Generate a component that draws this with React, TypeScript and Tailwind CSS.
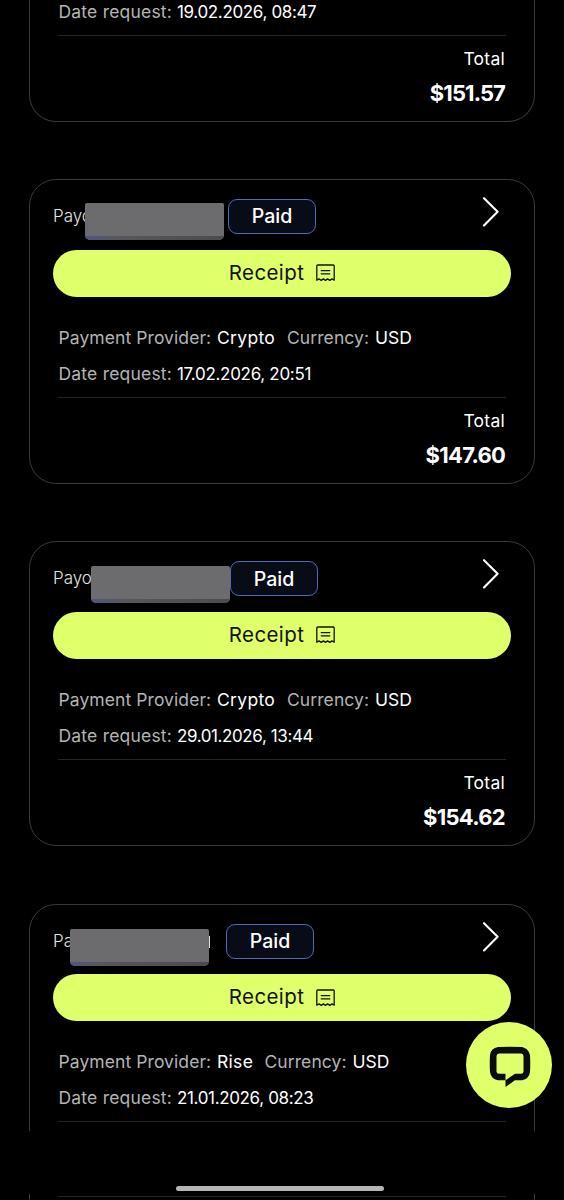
type Payout = {
  title: string;
  maskClass: string;
  badgeClass: string;
  provider: string;
  providerClass: string;
  date: string;
  dateClass: string;
  amount?: string;
  amountClass?: string;
};

const payouts: Payout[] = [
  {
    title: 'Payo',
    maskClass: 'left-[32px] top-[23px]',
    badgeClass: 'ml-[175px]',
    provider: 'Crypto',
    providerClass: 'w-[70px] tracking-[0.3px]',
    date: '17.02.2026, 20:51',
    dateClass: 'tracking-[-0.3px]',
    amount: '$147.60',
    amountClass: 'tracking-[-0.75px]',
  },
  {
    title: 'Payo',
    maskClass: 'left-[38px] top-[23.5px]',
    badgeClass: 'ml-[177px]',
    provider: 'Crypto',
    providerClass: 'w-[70px] tracking-[0.3px]',
    date: '29.01.2026, 13:44',
    dateClass: 'tracking-[-0.4px]',
    amount: '$154.62',
    amountClass: 'tracking-[-0.7px]',
  },
  {
    title: 'Pa',
    maskClass: 'left-[17px] top-[24px]',
    badgeClass: 'ml-[173px]',
    provider: 'Rise',
    providerClass: 'w-[47.5px] tracking-[0.3px]',
    date: '21.01.2026, 08:23',
    dateClass: 'tracking-[-0.35px]',
  },
];

function ReceiptIcon() {
  return (
    <svg width="19" height="18" viewBox="0 0 19 18" fill="none" stroke="#10130a" strokeWidth="1.3" strokeLinecap="round" strokeLinejoin="round">
      <path d="M0.8 16.2V2Q0.8 1 1.8 1H17.2Q18.2 1 18.2 2V16.2L16 14.9L13.8 16.4L11.6 14.9L9.5 16.4L7.4 14.9L5.2 16.4L3 14.9Z" />
      <path d="M5.2 6.6H13.8M5.2 9.8H13.8" />
    </svg>
  );
}

function Summary({ date, dateClass, amount, amountClass }: Pick<Payout, 'date' | 'dateClass' | 'amount' | 'amountClass'>) {
  return (
    <>
      <div className="flex h-6 items-center whitespace-nowrap px-[5.5px] text-[17.5px] leading-6">
        <span className="w-[118.5px] tracking-[0.2px] text-[#b4b4b4]">Date request:</span>
        <span className={`text-[17px] ${dateClass}`}>{date}</span>
      </div>
      <div className="mx-[5px] mt-[11px] h-px bg-[#252525]" />
      {amount && (
        <>
          <div className="mr-[6px] mt-[11px] text-right text-[17.5px] leading-6 tracking-[0.25px]">Total</div>
          <div className="mr-[6px] mt-[8px] text-right text-[22px] font-bold leading-7">
            <span className={amountClass}>{amount}</span>
          </div>
        </>
      )}
    </>
  );
}

function Card({ item }: { item: Payout }) {
  return (
    <article className="h-[305px] w-[506px] shrink-0 rounded-[27px] border border-[#3a3a3a] px-[23px]">
      <header className="relative flex pt-[19px]">
        <span className="absolute left-0 top-[24px] text-[17px] font-light leading-6 text-[#e4e4e4]">{item.title}</span>
        {item.provider === 'Rise' && <span className="absolute left-[155.5px] top-[31px] h-[12px] w-[1.5px] bg-[#e0e0e0]" />}
        <div className={`absolute flex h-[37px] w-[138.5px] items-end overflow-hidden rounded-b-[5px] rounded-t-[2px] bg-[#6c6c6e] ${item.maskClass}`}>
          <div className="h-[4px] w-full bg-linear-to-r from-[#50567c] via-[#57575b] via-25% to-[#4c4c4f]" />
        </div>
        <span className={`flex h-[35px] w-[88px] items-center justify-center rounded-[9px] border-[1.5px] border-[#5468b4] bg-[#070c17] pt-px text-[19.5px] font-medium ${item.badgeClass}`}>
          Paid
        </span>
        <svg className="ml-auto mr-[12px] mt-[-2px]" width="17" height="30" viewBox="0 0 17 30" fill="none" stroke="white" strokeWidth="2.1" strokeLinecap="round" strokeLinejoin="round">
          <path d="M2 1.2L15.6 14.8L2 28.4" />
        </svg>
      </header>
      <button className="mt-[15.5px] flex h-[47px] w-[458px] items-center justify-center gap-[12px] rounded-full bg-[#dfff6b] text-[20.5px] tracking-[0.4px] text-[#10130a]">
        Receipt
        <ReceiptIcon />
      </button>
      <div className="mb-[12px] mt-[29px] flex h-6 items-center whitespace-nowrap px-[5.5px] text-[17.5px] leading-6">
        <span className="w-[158.5px] tracking-[0.08px] text-[#b4b4b4]">Payment Provider:</span>
        <span className={item.providerClass}>{item.provider}</span>
        <span className="w-[88px] tracking-[0.08px] text-[#b4b4b4]">Currency:</span>
        <span>USD</span>
      </div>
      <Summary {...item} />
    </article>
  );
}

function ChatButton() {
  return (
    <button aria-label="Chat" className="absolute left-[466px] top-[1022px] flex h-[86px] w-[86px] items-center justify-center rounded-full bg-[#dfff6b] pl-px pt-[3px]">
      <svg className="overflow-visible" width="40" height="40" viewBox="0 0 40 40" fill="#090c12">
        <path
          fillRule="evenodd"
          d="M8 0Q20 -0.6 32 0Q38 1 40 8Q40.5 16 40 25Q39 32 32 33.3H25L15.5 40V33.3H8Q1 32 0 25Q-0.5 16 0 8Q1 1 8 0ZM9 6.5Q6.7 6.6 6.5 9V24.5Q6.7 26.7 9 26.8H15.5V33.3L25 26.8H31Q33.4 26.7 33.5 24.5V9Q33.3 6.6 31 6.5Z"
        />
      </svg>
    </button>
  );
}

export default function App() {
  return (
    <div className="relative flex h-[1200px] w-[564px] flex-col overflow-hidden bg-black font-['Inter',sans-serif] text-white">
      <main className="flex h-[1131px] shrink-0 flex-col items-center gap-[57.25px] overflow-hidden">
        <article className="h-[121.75px] w-[506px] shrink-0 rounded-b-[27px] border border-t-0 border-[#3a3a3a] px-[23px]">
          <Summary date="19.02.2026, 08:47" dateClass="tracking-[-0.35px]" amount="$151.57" amountClass="tracking-[-0.9px]" />
        </article>
        {payouts.map((item) => (
          <Card key={item.date} item={item} />
        ))}
      </main>
      <footer className="flex h-[63px] shrink-0 items-end justify-center pb-[3px]">
        <div className="h-[5px] w-[208px] -translate-x-[2px] rounded-full bg-[#b5b5b5]" />
      </footer>
      <div className="mx-auto h-[6px] w-[506px] border-x border-[#3a3a3a] px-[28px] pt-[2px]">
        <div className="h-px bg-[#252525]" />
      </div>
      <ChatButton />
    </div>
  );
}
